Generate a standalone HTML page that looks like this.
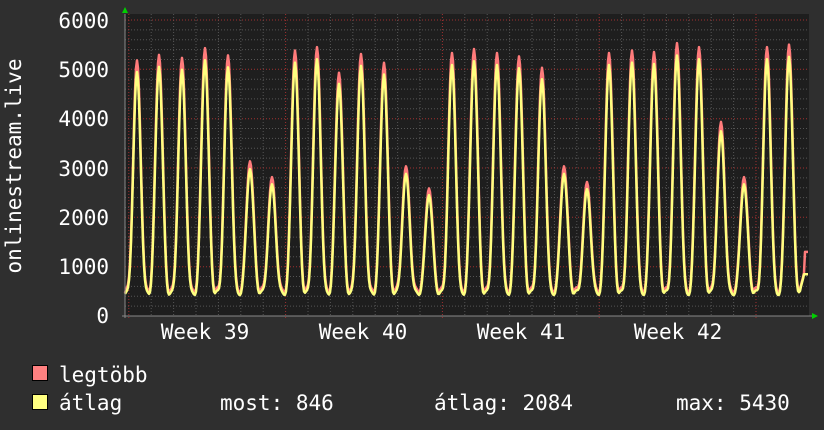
<!DOCTYPE html>
<html><head><meta charset="utf-8"><style>
html,body{margin:0;padding:0;background:#2f2f2f;}
body{width:824px;height:430px;overflow:hidden;position:relative;}
svg{position:absolute;left:0;top:0;}
text{font-family:"DejaVu Sans Mono","Liberation Mono",monospace;fill:#fff;font-size:21px;}
</style></head><body>
<svg id="g" width="824" height="430" xmlns="http://www.w3.org/2000/svg">
<rect x="0" y="0" width="824" height="430" fill="#2f2f2f"/>
<rect x="125" y="14" width="684" height="302" fill="#1e1e1e"/>
<g id="grid"></g>
<path id="mx" fill="none" stroke="#ff7b7b" stroke-width="2.5" stroke-linejoin="round"/>
<path id="av" fill="none" stroke="#ffff80" stroke-width="2.5" stroke-linejoin="round"/>
<line x1="125" y1="14" x2="125" y2="318" stroke="#888" stroke-width="1"/>
<line x1="122" y1="316" x2="812" y2="316" stroke="#888" stroke-width="1"/>
<polygon points="122,13 128,13 125,7" fill="#00d000"/>
<polygon points="812,313 812,319 818,316" fill="#00d000"/>
<g text-anchor="end">
<text x="109" y="28">6000</text>
<text x="109" y="77">5000</text>
<text x="109" y="126">4000</text>
<text x="109" y="176">3000</text>
<text x="109" y="225">2000</text>
<text x="109" y="274">1000</text>
<text x="109" y="323">0</text>
</g>
<text transform="translate(21,166) rotate(-90)" text-anchor="middle">onlinestream.live</text>
<g text-anchor="middle">
<text x="205" y="339">Week 39</text>
<text x="363" y="339">Week 40</text>
<text x="521" y="339">Week 41</text>
<text x="678" y="339">Week 42</text>
</g>
<rect x="32.5" y="365.5" width="15" height="15" fill="#ff8080" stroke="#000"/>
<rect x="32.5" y="394.5" width="15" height="15" fill="#ffff80" stroke="#000"/>
<text x="59" y="382">legtöbb</text>
<text x="59" y="410">átlag</text>
<text x="220" y="410">most: 846</text>
<text x="434" y="410">átlag: 2084</text>
<text x="676" y="410">max: 5430</text>
</svg>
<script>
(function(){
var g=document.getElementById("grid"),s="";
function Y(v){return 316-v*296/6000;}
for(var v=200;v<6000;v+=200){if(v%1000==0)continue;var y=Y(v).toFixed(1);s+='<line x1="125" x2="809" y1="'+y+'" y2="'+y+'" stroke="#555" stroke-dasharray="1,2"/>';}
for(var x=756;x>125;x-=22.4){var r=(756-x)/156.8;if(Math.abs(r-Math.round(r))<0.01)continue;s+='<line y1="14" y2="316" x1="'+x.toFixed(1)+'" x2="'+x.toFixed(1)+'" stroke="#555" stroke-dasharray="1,2"/>';}
for(var v=1000;v<=6000;v+=1000){var y=Y(v).toFixed(1);s+='<line x1="125" x2="809" y1="'+y+'" y2="'+y+'" stroke="#a03030" stroke-dasharray="1,2"/>';}
for(var x=756;x>125;x-=156.8){s+='<line y1="14" y2="318" x1="'+x.toFixed(1)+'" x2="'+x.toFixed(1)+'" stroke="#a03030" stroke-dasharray="1,2"/>';}
g.innerHTML=s;
var pk=[[137,5150],[159,5260],[182,5200],[205,5400],[228,5250],[250,3100],[272,2780],[295,5350],[317,5420],[339,4900],[361,5280],[384,5100],[406,3000],[429,2550],[452,5300],[474,5380],[497,5300],[519,5230],[542,5000],[564,3000],[587,2680],[609,5300],[632,5350],[654,5320],[677,5500],[699,5420],[721,3900],[744,2780],[767,5420],[789,5470]];
var a="",m="";
for(var x=125;x<=808;x+=1){
 var c=null;
 for(var i=0;i<pk.length;i++){var d=x-pk[i][0];if(Math.abs(d)<=11.2){c=pk[i];break;}}
 var base=470+50*Math.sin(x*0.7);
 var av=base;
 if(c){var d=(x-c[0])/22.4;var f=Math.pow((1+Math.cos(2*Math.PI*d))/2,1.8);av=base+(c[1]*0.96-base)*f;}
 if(x>800){av=base+(846-base)*Math.min(1,(x-800)/4);}
 var mx=av*1.04+(c?40:0);
 if(x>804)mx=1300;
 a+=(x==125?"M":"L")+x+","+Y(av).toFixed(1);
 m+=(x==125?"M":"L")+x+","+Y(mx).toFixed(1);
}
document.getElementById("av").setAttribute("d",a);
document.getElementById("mx").setAttribute("d",m);
})();
</script>
</body></html>
